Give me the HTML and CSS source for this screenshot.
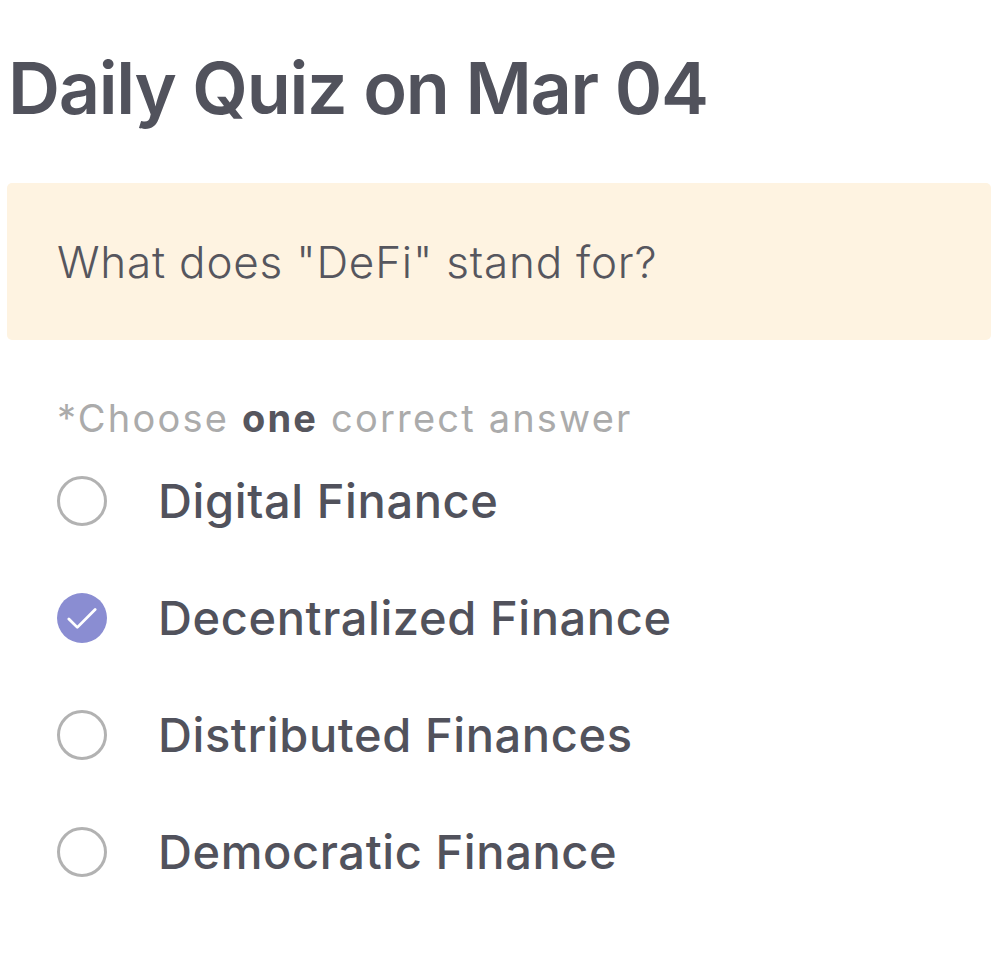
FILE: index.html
```html
<!DOCTYPE html>
<html lang="en">
<head>
  <meta charset="UTF-8" />
  <title>Daily Quiz</title>
  <link rel="stylesheet" href="styles.css">
</head>
<body>
  <div class="quiz">
    <h1 class="quiz-title">Daily Quiz on Mar 04</h1>

    <div class="question">
      <p>What does "DeFi" stand for?</p>
    </div>

    <p class="hint">*Choose <b>one</b> correct answer</p>

    <ul class="options">
      <li class="option">
        <span class="radio"></span>
        <span class="label">Digital Finance</span>
      </li>
      <li class="option checked">
        <span class="radio">
          <svg class="check" viewBox="4 4 16 16"><path d="M5 12.5l4.5 4.5L19 7.5" fill="none" stroke="#fff" stroke-width="1.5" stroke-linecap="round" stroke-linejoin="round"/></svg>
        </span>
        <span class="label">Decentralized Finance</span>
      </li>
      <li class="option">
        <span class="radio"></span>
        <span class="label">Distributed Finances</span>
      </li>
      <li class="option">
        <span class="radio"></span>
        <span class="label">Democratic Finance</span>
      </li>
    </ul>
  </div>
</body>
</html>
```

FILE: styles.css
```css
body {
  margin: 0;
  font-family: 'Inter', 'Noto Sans', sans-serif;
  background-color: #ffffff;
  color: #51525c;
}

.quiz {
  padding: 0 17px 0 7px;
}

.quiz-title {
  margin: 0;
  padding: 40px 0 0 1px;
  font-size: 72px;
  font-weight: 600;
  line-height: 96px;
  letter-spacing: -1.3px;
  color: #51525c;
}

.question {
  margin-top: 47px;
  height: 157px;
  background-color: #fef3e1;
  border-radius: 5px;
  display: flex;
  align-items: center;
  padding-left: 50px;
}

.question p {
  margin: 0;
  font-size: 44px;
  font-weight: 300;
  letter-spacing: 0.8px;
  color: #56565e;
}

.hint {
  margin: 52px 0 0 50px;
  font-size: 38px;
  line-height: 52px;
  letter-spacing: 2.2px;
  color: #ababab;
}

.hint b {
  font-weight: 700;
  color: #56565e;
}

.options {
  list-style: none;
  margin: -2px 0 0 50px;
  padding: 0;
}

.option {
  display: flex;
  align-items: center;
  height: 117px;
}

.radio {
  box-sizing: border-box;
  width: 50px;
  height: 50px;
  border-radius: 50%;
  border: 3px solid #b2b2b2;
  display: flex;
  align-items: center;
  justify-content: center;
  flex-shrink: 0;
}

.option.checked .radio {
  border: none;
  background-color: #8a8dd2;
}

.check {
  width: 30px;
  height: 30px;
}

.label {
  margin-left: 51px;
  font-size: 47px;
  font-weight: 500;
  letter-spacing: 0.6px;
  color: #51525c;
}
```
